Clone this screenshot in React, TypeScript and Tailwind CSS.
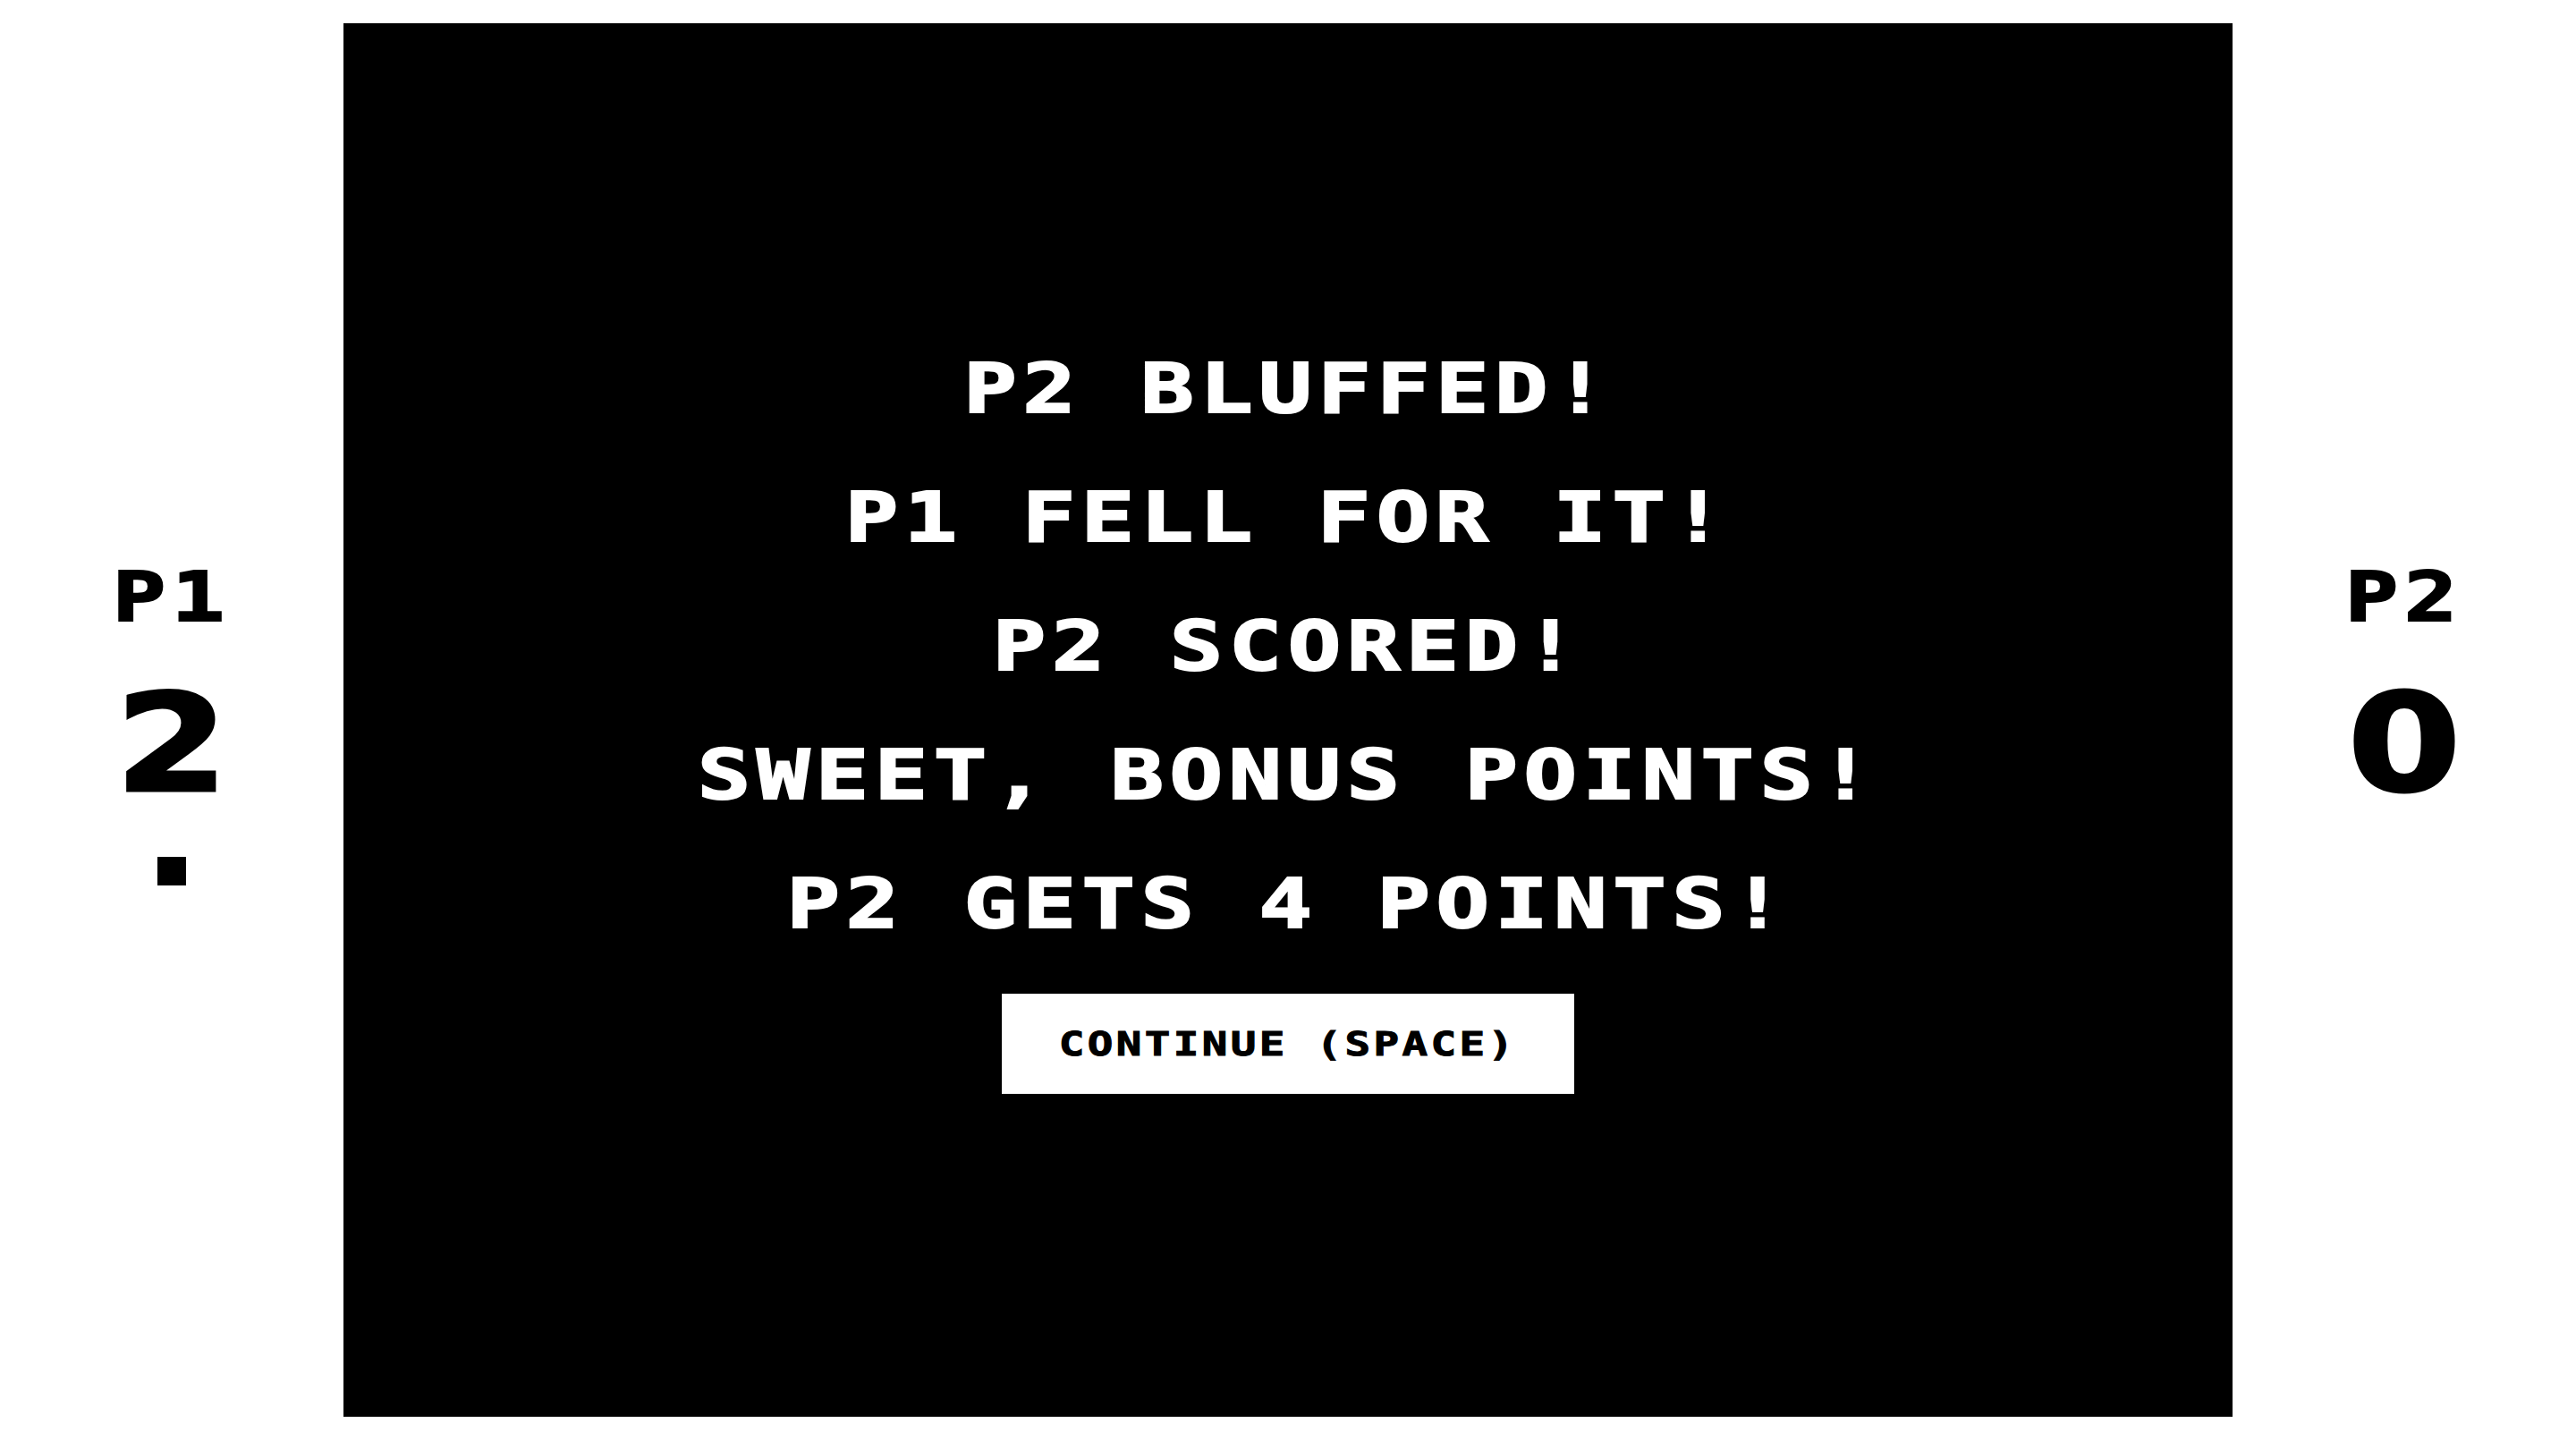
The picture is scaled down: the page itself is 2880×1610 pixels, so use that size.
import React from "react";

const pixelFont = "font-['DejaVu_Sans_Mono',monospace] font-bold uppercase";
// a touch of outline makes the mono glyphs read closer to chunky pixel type
const heavy = "[-webkit-text-stroke:2px_currentColor]";

const roundLog = [
  "P2 BLUFFED!",
  "P1 FELL FOR IT!",
  "P2 SCORED!",
  "SWEET, BONUS POINTS!",
  "P2 GETS 4 POINTS!",
];

function ScoreColumn({ label, score, active = false }: { label: string; score: number; active?: boolean }) {
  return (
    <aside className="flex w-[384px] flex-col items-center gap-[50px] pt-[10px]">
      <span className={`${pixelFont} ${heavy} scale-x-[1.3] text-[76px] leading-[76px] tracking-[5px]`}>{label}</span>
      {/* plain sans digits: the mono face puts a dot inside its zero */}
      <span className="scale-x-[1.2] font-['DejaVu_Sans',sans-serif] text-[152px] font-bold leading-[152px] [-webkit-text-stroke:3px_currentColor]">
        {score}
      </span>
      {/* turn marker */}
      <span className={active ? "h-[32px] w-[32px] bg-black" : "invisible h-[32px] w-[32px]"} />
    </aside>
  );
}

export default function App() {
  return (
    <div className="flex h-[1610px] w-[2880px] items-center bg-white text-black">
      <ScoreColumn label="P1" score={2} active />
      <main className="flex h-[1558px] w-[2112px] flex-col items-center justify-center gap-[62px] bg-black pt-[10px]">
        <div className="flex flex-col items-center gap-[68px]">
          {roundLog.map((line) => (
            <p
              key={line}
              className={`${pixelFont} ${heavy} scale-x-[1.3] whitespace-pre text-[76px] leading-[76px] tracking-[5px] text-white`}
            >
              {line}
            </p>
          ))}
        </div>
        <button
          type="button"
          className="flex h-[112px] w-[640px] items-center justify-center bg-white text-black"
        >
          <span
            className={`${pixelFont} scale-x-[1.25] text-[38px] leading-none tracking-[2.7px] [-webkit-text-stroke:1px_currentColor]`}
          >
            CONTINUE (SPACE)
          </span>
        </button>
      </main>
      <ScoreColumn label="P2" score={0} />
    </div>
  );
}
